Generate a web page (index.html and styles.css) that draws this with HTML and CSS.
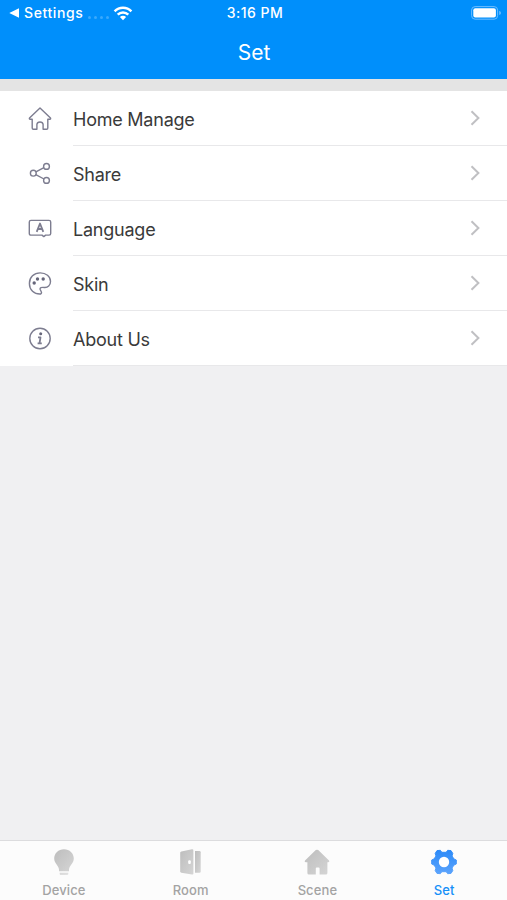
FILE: index.html
```html
<!DOCTYPE html>
<html lang="en">
<head>
    <meta charset="UTF-8">
    <meta name="viewport" content="width=device-width, initial-scale=1.0">
    <title>Set</title>
    <link rel="stylesheet" href="styles.css">
</head>
<body>
    <header>
        <div class="status">
            <div class="back">
                <svg width="11" height="10" viewBox="0 0 11 10"><path d="M0.3 5L10 0.3V9.7Z" fill="#fff"/></svg>
                <span class="back-text">Settings</span>
                <span class="dots"><i></i><i></i><i></i><i></i></span>
                <svg class="wifi" width="20" height="15" viewBox="0 0 20 15">
                    <g fill="none" stroke="#fff" stroke-width="2.5">
                        <path d="M1.6 5.3A11.9 11.9 0 0 1 18.4 5.3"/>
                        <path d="M4.7 8.7A7.5 7.5 0 0 1 15.3 8.7"/>
                    </g>
                    <path d="M6.9 11A4.4 4.4 0 0 1 13.1 11L10 14.2Z" fill="#fff"/>
                </svg>
            </div>
            <span class="time">3:16 PM</span>
            <svg class="battery" width="31" height="14" viewBox="0 0 31 14">
                <rect x="0.6" y="0.6" width="26" height="12.6" rx="3.5" fill="none" stroke="#6dbdff" stroke-width="1"/>
                <rect x="2.3" y="2.3" width="22.6" height="9.2" rx="2" fill="#fff"/>
                <path d="M28.2 4.7Q30 5.5 30 6.9T28.2 9.1Z" fill="#6dbdff"/>
            </svg>
        </div>
        <h1>Set</h1>
    </header>

    <ul class="menu">
        <li>
            <svg class="icon" viewBox="0 0 24 24">
                <path d="M12 2L1.5 12Q1 13.1 2.2 13.2H4.2V22.1Q4.2 23.3 5.4 23.3H8.9V18.4Q9.2 16 12 16T15.1 18.4V23.3H18.6Q19.8 23.3 19.8 22.1V13.2H21.8Q23 13.1 22.5 12Z"/>
            </svg>
            <div class="line"><span>Home Manage</span><svg class="arrow" viewBox="0 0 10 16"><path d="M1.5 1.2L8.4 8L1.5 14.8"/></svg></div>
        </li>
        <li>
            <svg class="icon" viewBox="0 0 24 24">
                <circle cx="5.3" cy="12.2" r="2.9"/>
                <circle cx="18.5" cy="5.4" r="2.9"/>
                <circle cx="18.5" cy="19.4" r="2.9"/>
                <path d="M7.9 10.9L15.9 6.7M7.8 13.7L16 18"/>
            </svg>
            <div class="line"><span>Share</span><svg class="arrow" viewBox="0 0 10 16"><path d="M1.5 1.2L8.4 8L1.5 14.8"/></svg></div>
        </li>
        <li>
            <svg class="icon" viewBox="0 0 24 24">
                <path d="M3 4.4H21Q22.7 4.4 22.7 6.1V17.4Q22.7 19.1 21 19.1H17.6L15.8 20.6L14 19.1H3Q1.3 19.1 1.3 17.4V6.1Q1.3 4.4 3 4.4Z"/>
                <path class="thick" d="M8.7 15.9L12 7.5L15.3 15.9M10 13H14"/>
            </svg>
            <div class="line"><span>Language</span><svg class="arrow" viewBox="0 0 10 16"><path d="M1.5 1.2L8.4 8L1.5 14.8"/></svg></div>
        </li>
        <li>
            <svg class="icon" viewBox="0 0 24 24">
                <path d="M12.6 23C6 23.4 1.4 18.6 1.4 12.4C1.4 6.2 6 1.9 12.2 1.9C18 1.9 22.5 5.4 22.5 10.5C22.5 14.4 19.8 16.8 16.3 16.5C13.4 16.2 11.6 16.6 12.2 18.5C12.8 20.2 14.6 22.2 12.6 23Z"/>
                <g class="solid">
                    <circle cx="6.2" cy="12" r="1.7"/>
                    <circle cx="9.5" cy="8" r="1.7"/>
                    <circle cx="15.2" cy="8" r="1.7"/>
                </g>
            </svg>
            <div class="line"><span>Skin</span><svg class="arrow" viewBox="0 0 10 16"><path d="M1.5 1.2L8.4 8L1.5 14.8"/></svg></div>
        </li>
        <li>
            <svg class="icon" viewBox="0 0 24 24">
                <circle cx="12" cy="12.5" r="10.2"/>
                <circle class="solid" cx="12.7" cy="7.8" r="1.5"/>
                <path class="thick" d="M10 11.4H12.5L11.5 17.4H13.8M9.6 17.4H11.5"/>
            </svg>
            <div class="line"><span>About Us</span><svg class="arrow" viewBox="0 0 10 16"><path d="M1.5 1.2L8.4 8L1.5 14.8"/></svg></div>
        </li>
    </ul>

    <nav>
        <svg class="defs" width="0" height="0">
            <linearGradient id="gray" x1="0" y1="0" x2="1" y2="1">
                <stop offset="0" stop-color="#bdbdbd"/>
                <stop offset="1" stop-color="#d5d5d5"/>
            </linearGradient>
            <linearGradient id="blue" x1="0" y1="0" x2="0" y2="1">
                <stop offset="0" stop-color="#2c8af8"/>
                <stop offset="1" stop-color="#5ba3fc"/>
            </linearGradient>
        </svg>
        <a>
            <svg width="28" height="28" viewBox="0 0 28 28" fill="url(#gray)">
                <path d="M14 1.2C19.6 1.2 23.8 5.3 23.8 10.6C23.8 15.2 19.4 18 19 21.4V23.2H9V21.4C8.6 18 4.2 15.2 4.2 10.6C4.2 5.3 8.4 1.2 14 1.2Z"/>
                <path d="M9.7 24.8H18.3V26Q18.3 27 17.3 27H10.7Q9.7 27 9.7 26Z" opacity="0.6"/>
            </svg>
            Device
        </a>
        <a>
            <svg width="28" height="28" viewBox="0 0 28 28" fill="url(#gray)">
                <path d="M4.4 3.4L15 1.2Q16.4 1 16.4 2.4V25.3Q16.4 26.7 15 26.5L4.4 24.7Q3.2 24.4 3.2 23.3V4.8Q3.2 3.7 4.4 3.4Z"/>
                <path d="M18 3H22.5Q23.7 3 23.7 4.2V23.6Q23.7 24.8 22.5 24.8H18Z"/>
                <rect x="11.2" y="12.2" width="2.6" height="3.8" rx="1" fill="#fff"/>
            </svg>
            Room
        </a>
        <a>
            <svg width="28" height="28" viewBox="0 0 28 28" fill="url(#gray)">
                <path d="M12.8 2.1Q14 1.2 15.2 2.1L26 12.4Q27 14.1 25.2 14.3H24.4V25Q24.4 26.5 22.9 26.5H16.6V20.6Q16.6 19.6 15.6 19.6H13.8Q12.8 19.6 12.8 20.6V26.5H5.9Q4.4 26.5 4.4 25V14.3H2.8Q1 14.1 2 12.4Z"/>
            </svg>
            Scene
        </a>
        <a class="active">
            <svg width="28" height="28" viewBox="0 0 28 28">
                <path d="M7 2.6L10.3 2.3L11.8 4.3H16.2L17.7 2.3L21 2.6L22.8 5.4L22 8L24 11L26.3 12V16L24 17L22 20L22.8 22.6L21 25.4L17.7 25.7L16.2 23.7H11.8L10.3 25.7L7 25.4L5.2 22.6L6 20L4 17L1.7 16V12L4 11L6 8L5.2 5.4Z" fill="url(#blue)" stroke="url(#blue)" stroke-width="1" stroke-linejoin="round"/>
                <circle cx="14" cy="14" r="5.2" fill="#fff"/>
            </svg>
            Set
        </a>
    </nav>
</body>
</html>
```
FILE: styles.css
```css
body {
    margin: 0;
    height: 900px;
    display: flex;
    flex-direction: column;
    background-color: #f0f0f2;
    font-family: Inter, "Liberation Sans", sans-serif;
}

header {
    height: 79px;
    background-color: #008ffb;
    color: white;
    border-bottom: 12px solid #e4e4e4; /* gray strip above the list */
}

.status {
    display: grid;
    grid-template-columns: 1fr auto 1fr;
    align-items: center;
    height: 26px;
    padding: 0 6px 0 9px;
    font-size: 14px;
    font-weight: 500;
}

.back {
    display: flex;
    align-items: center;
}

.back-text {
    margin-left: 4px;
    padding-bottom: 1px;
    letter-spacing: 0.6px;
}

.dots {
    display: flex;
    gap: 3px;
    margin: 8px 4px 0 5px;
}

.dots i {
    width: 3px;
    height: 3px;
    border-radius: 50%;
    background-color: #3aa9fc;
}

.time {
    padding-bottom: 1px;
    letter-spacing: 0.5px;
}

.battery {
    justify-self: end;
    margin-right: -1px;
}

h1 {
    margin: 12px 0 0 1px;
    font-size: 21px;
    line-height: 29px;
    font-weight: 400;
    text-align: center;
}

.menu {
    list-style: none;
    margin: 0;
    padding: 0;
    background-color: white;
}

.menu li {
    display: flex;
    height: 55px;
}

.icon {
    width: 24px;
    height: 24px;
    margin: 15px 21px 0 28px;
    fill: none;
    stroke: #7d7d90;
    stroke-width: 1.4;
    stroke-linejoin: round;
}

.icon .solid {
    fill: #66667a;
    stroke: none;
}

.icon .thick {
    stroke-width: 1.8;
}

.line {
    flex: 1;
    display: flex;
    align-items: center;
    justify-content: space-between;
    box-sizing: border-box;
    padding-right: 27px;
    border-bottom: 1px solid #e8e8ea;
    font-size: 18px;
    letter-spacing: -0.23px;
    color: #3a3a3a;
}

.line span {
    padding-top: 2px;
}

.arrow {
    width: 10px;
    height: 16px;
    fill: none;
    stroke: #c0c0c3;
    stroke-width: 2;
}

nav {
    display: flex;
    height: 60px;
    margin-top: auto;
    box-sizing: border-box;
    border-top: 1px solid #dcdcde;
    background-color: #fcfcfc;
}

nav a {
    flex: 1;
    display: flex;
    flex-direction: column;
    align-items: center;
    padding: 7px 0 0 1px;
    font-size: 13px;
    line-height: 17px;
    font-weight: 500;
    letter-spacing: 0.1px;
    color: #a3a3a3;
}

nav a svg {
    margin-bottom: 6px;
}

nav .active {
    color: #1690f8;
}

.defs {
    position: absolute;
}
```
